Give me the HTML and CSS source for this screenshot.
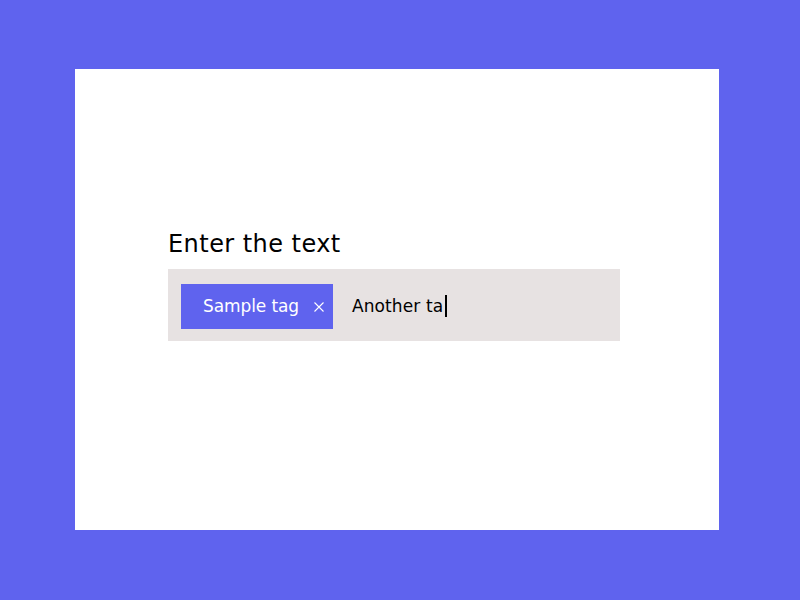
FILE: index.html
```html
<!DOCTYPE html>
<html>
<head>
<meta charset="utf-8">
<link rel="stylesheet" href="styles.css">
</head>
<body>
<div class="card">
  <div class="field">
    <label class="label">Enter the text</label>
    <div class="tags-input">
      <span class="tag">Sample tag<span class="tag-remove"><svg width="10" height="10" viewBox="0 0 10 10"><path d="M0.5 0.5L9.5 9.5M9.5 0.5L0.5 9.5" stroke="#ffffff" stroke-width="1.1" fill="none"/></svg></span></span>
      <span class="entry">Another ta<span class="caret"></span></span>
    </div>
  </div>
</div>
</body>
</html>
```
FILE: styles.css
```css
html, body {
  margin: 0;
  padding: 0;
}
body {
  background: #5f63ee;
  width: 800px;
  height: 600px;
  padding: 69px 81px 70px 75px;
  box-sizing: border-box;
  font-family: "DejaVu Sans", "Noto Sans", sans-serif;
}
.card {
  background: #ffffff;
  height: 461px;
  padding: 160px 99px 0 93px;
  box-sizing: border-box;
}
.field {
  display: flex;
  flex-direction: column;
}
.label {
  font-size: 24px;
  line-height: 30px;
  letter-spacing: 0.45px;
  color: #000000;
  margin-bottom: 10px;
}
.tags-input {
  background: #e7e2e2;
  height: 72px;
  padding: 15px 13px 12px;
  box-sizing: border-box;
  display: flex;
  align-items: stretch;
  gap: 19px;
}
.tag {
  background: #5f63ee;
  color: #ffffff;
  height: 45px;
  width: 152px;
  box-sizing: border-box;
  padding: 0 9px 1px 22px;
  display: flex;
  align-items: center;
  justify-content: space-between;
  font-size: 17px;
  letter-spacing: -0.1px;
}
.tag-remove {
  display: flex;
  align-items: center;
  padding-top: 2px;
}
.entry {
  font-size: 17px;
  color: #000000;
  display: flex;
  align-items: center;
  padding-bottom: 1px;
  letter-spacing: 0.1px;
}
.caret {
  display: inline-block;
  width: 2px;
  height: 22px;
  background: #000000;
  margin-left: 2px;
}
```
